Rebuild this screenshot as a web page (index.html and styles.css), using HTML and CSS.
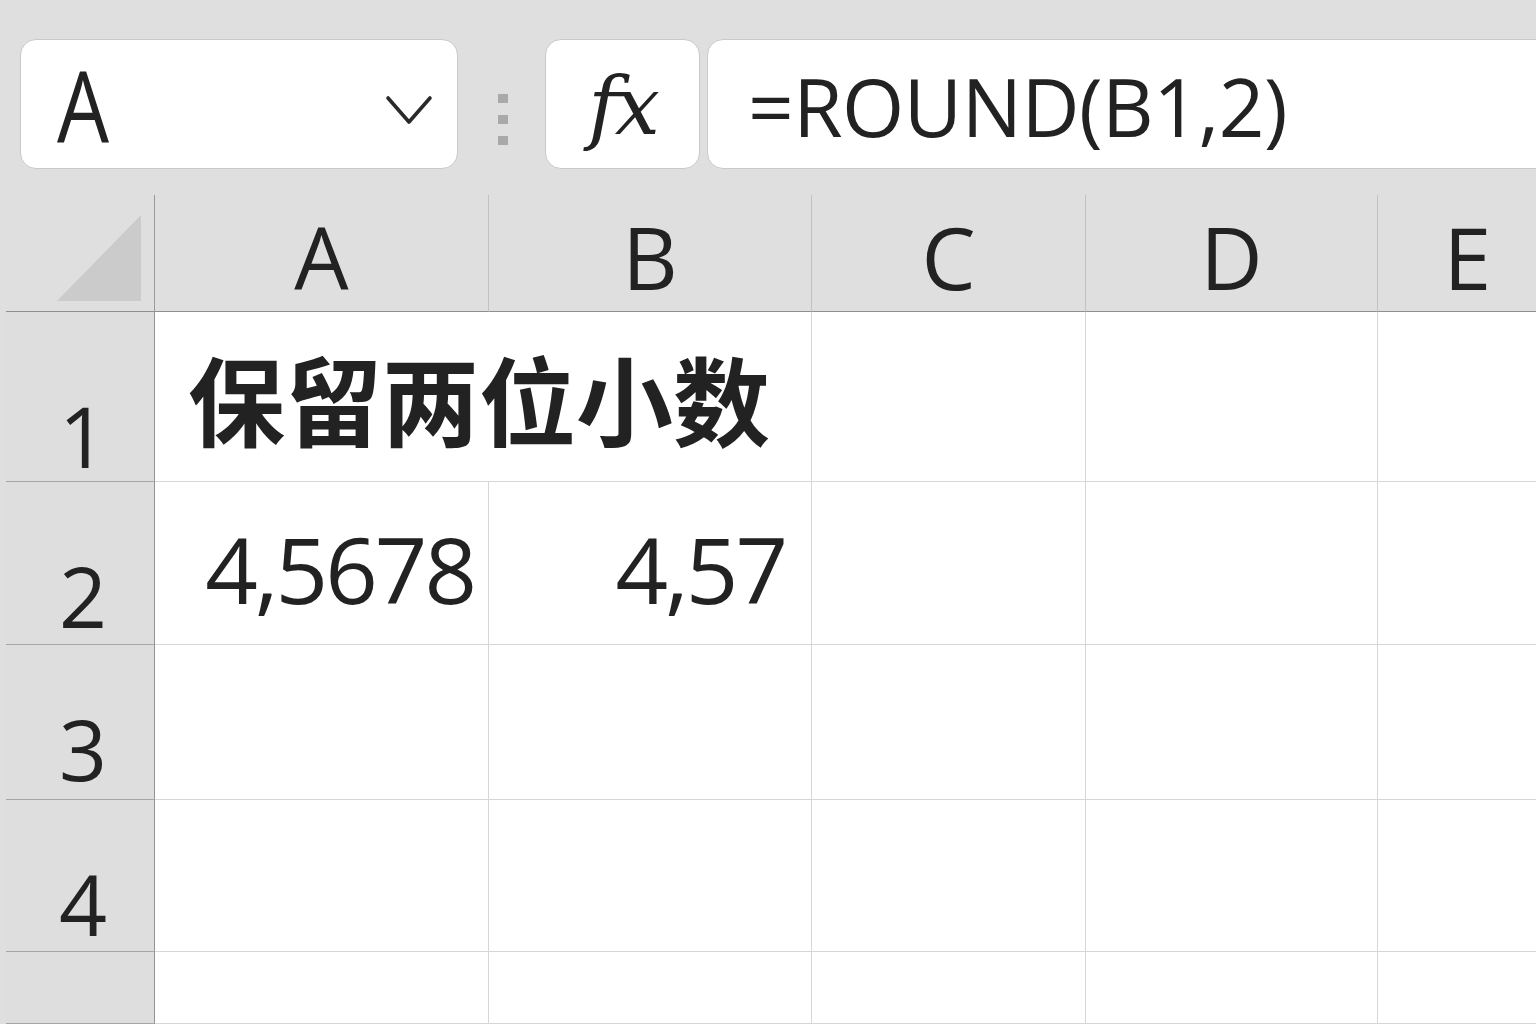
FILE: index.html
```html
<!DOCTYPE html>
<html lang="zh">
<head>
<meta charset="utf-8">
<title>ROUND</title>
<link rel="stylesheet" href="styles.css">
</head>
<body>
<div class="toolbar">
  <div class="namebox">
    <span class="namebox-text">A</span>
    <svg class="chevron" viewBox="0 0 48 32" width="48" height="32"><path d="M3 3 L24 27 L45 3" fill="none" stroke="#2a2a2a" stroke-width="3.6" stroke-linecap="round" stroke-linejoin="round"/></svg>
  </div>
  <div class="grip"><span></span><span></span><span></span></div>
  <div class="fxbox"><span class="fx">fx</span></div>
  <div class="formula"><span class="formula-text">=ROUND(B1,2)</span></div>
</div>
<div class="sheet">
  <div class="corner"><svg viewBox="0 0 84 86" width="84" height="86"><polygon points="84,0 84,86 0,86" fill="#cbcbcb"/></svg></div>
  <div class="colhead">A</div>
  <div class="colhead">B</div>
  <div class="colhead">C</div>
  <div class="colhead">D</div>
  <div class="colhead">E</div>

  <div class="rowhead r1">1</div>
  <div class="cell title span2">保留两位小数</div>
  <div class="cell"></div>
  <div class="cell"></div>
  <div class="cell"></div>

  <div class="rowhead r2">2</div>
  <div class="cell num num-a">4,5678</div>
  <div class="cell num num-b">4,57</div>
  <div class="cell"></div>
  <div class="cell"></div>
  <div class="cell"></div>

  <div class="rowhead r3">3</div>
  <div class="cell"></div>
  <div class="cell"></div>
  <div class="cell"></div>
  <div class="cell"></div>
  <div class="cell"></div>

  <div class="rowhead r4">4</div>
  <div class="cell"></div>
  <div class="cell"></div>
  <div class="cell"></div>
  <div class="cell"></div>
  <div class="cell"></div>

  <div class="rowhead r5"></div>
  <div class="cell"></div>
  <div class="cell"></div>
  <div class="cell"></div>
  <div class="cell"></div>
  <div class="cell"></div>
</div>
</body>
</html>
```

FILE: styles.css
```css
* { box-sizing: border-box; }
html, body {
  margin: 0;
  padding: 0;
}
body {
  width: 1536px;
  height: 1024px;
  overflow: hidden;
  background: #dfdfdf;
  color: #222;
  font-family: "Open Sans", "Noto Sans", "Noto Sans CJK SC", sans-serif;
}

/* toolbar */
.toolbar {
  height: 195px;
  display: flex;
  align-items: flex-start;
  padding: 39px 0 0 20px;
}
.namebox, .fxbox, .formula {
  height: 130px;
  background: #fff;
  border: 1.5px solid #c9c9c9;
  border-radius: 16px;
  display: flex;
  align-items: center;
}
.namebox {
  width: 438px;
  padding-left: 36px;
  padding-right: 24px;
  justify-content: space-between;
}
.namebox-text {
  display: inline-block;
  font-size: 98px;
  line-height: 1;
  transform: scaleX(0.84);
  transform-origin: left center;
}
.chevron {
  margin-top: 14px;
}
.grip {
  align-self: center;
  margin-left: 40px;
  margin-right: 37px;
  display: flex;
  flex-direction: column;
  gap: 12px;
  margin-top: 4px;
}
.grip span {
  display: block;
  width: 10px;
  height: 9px;
  background: #a9a9a9;
}
.fxbox {
  width: 155px;
  justify-content: center;
}
.fx {
  font-family: "DejaVu Serif", "Liberation Serif", serif;
  font-style: italic;
  font-size: 80px;
  line-height: 1;
  margin-top: 6px;
  letter-spacing: -3px;
}
.formula {
  flex: 1;
  margin-left: 7px;
  margin-right: -30px;
  padding-left: 40px;
}
.formula-text {
  font-size: 80px;
  line-height: 1;
  padding-top: 4px;
  letter-spacing: -0.5px;
}

/* sheet */
.sheet {
  width: 1560px;
  height: 829px;
  display: grid;
  grid-template-columns: 155px 334px 323px 274px 292px 180px;
  grid-template-rows: 117px 170px 163px 155px 152px 72px;
}
.corner {
  border-right: 1.5px solid #9a9a9a;
  border-bottom: 1.5px solid #8f8f8f;
  display: flex;
  align-items: flex-end;
  justify-content: flex-end;
  padding: 0 13px 10px 0;
  margin-left: 6px;
}
.colhead {
  border-right: 1.5px solid #c2c2c2;
  border-bottom: 1.5px solid #8f8f8f;
  display: flex;
  align-items: flex-end;
  justify-content: center;
  font-size: 86px;
  line-height: 1;
  padding-bottom: 11px;
}
.rowhead {
  background: #dedede;
  border-right: 1.5px solid #929292;
  border-bottom: 1.5px solid #a6a6a6;
  display: flex;
  align-items: flex-end;
  justify-content: center;
  padding-left: 6px;
  font-size: 84px;
  line-height: 1;
  margin-left: 6px;
}
.r1 { padding-bottom: 3px; }
.r2 { padding-bottom: 6px; }
.r3 { padding-bottom: 8px; }
.r4 { padding-bottom: 5px; }

.cell {
  background: #fff;
  border-right: 1.5px solid #d7d7d7;
  border-bottom: 1.5px solid #d7d7d7;
}
.span2 { grid-column: span 2; }
.title {
  display: flex;
  align-items: center;
  padding-left: 33px;
  font-family: "Noto Sans CJK SC", sans-serif;
  font-weight: 700;
  font-size: 97px;
  line-height: 1;
  white-space: nowrap;
}
.num {
  display: flex;
  align-items: flex-end;
  justify-content: flex-end;
  font-size: 92px;
  line-height: 1;
  padding-bottom: 29px;
  letter-spacing: -3px;
}
.num-a { padding-right: 14px; }
.num-b { padding-right: 26px; }
```
